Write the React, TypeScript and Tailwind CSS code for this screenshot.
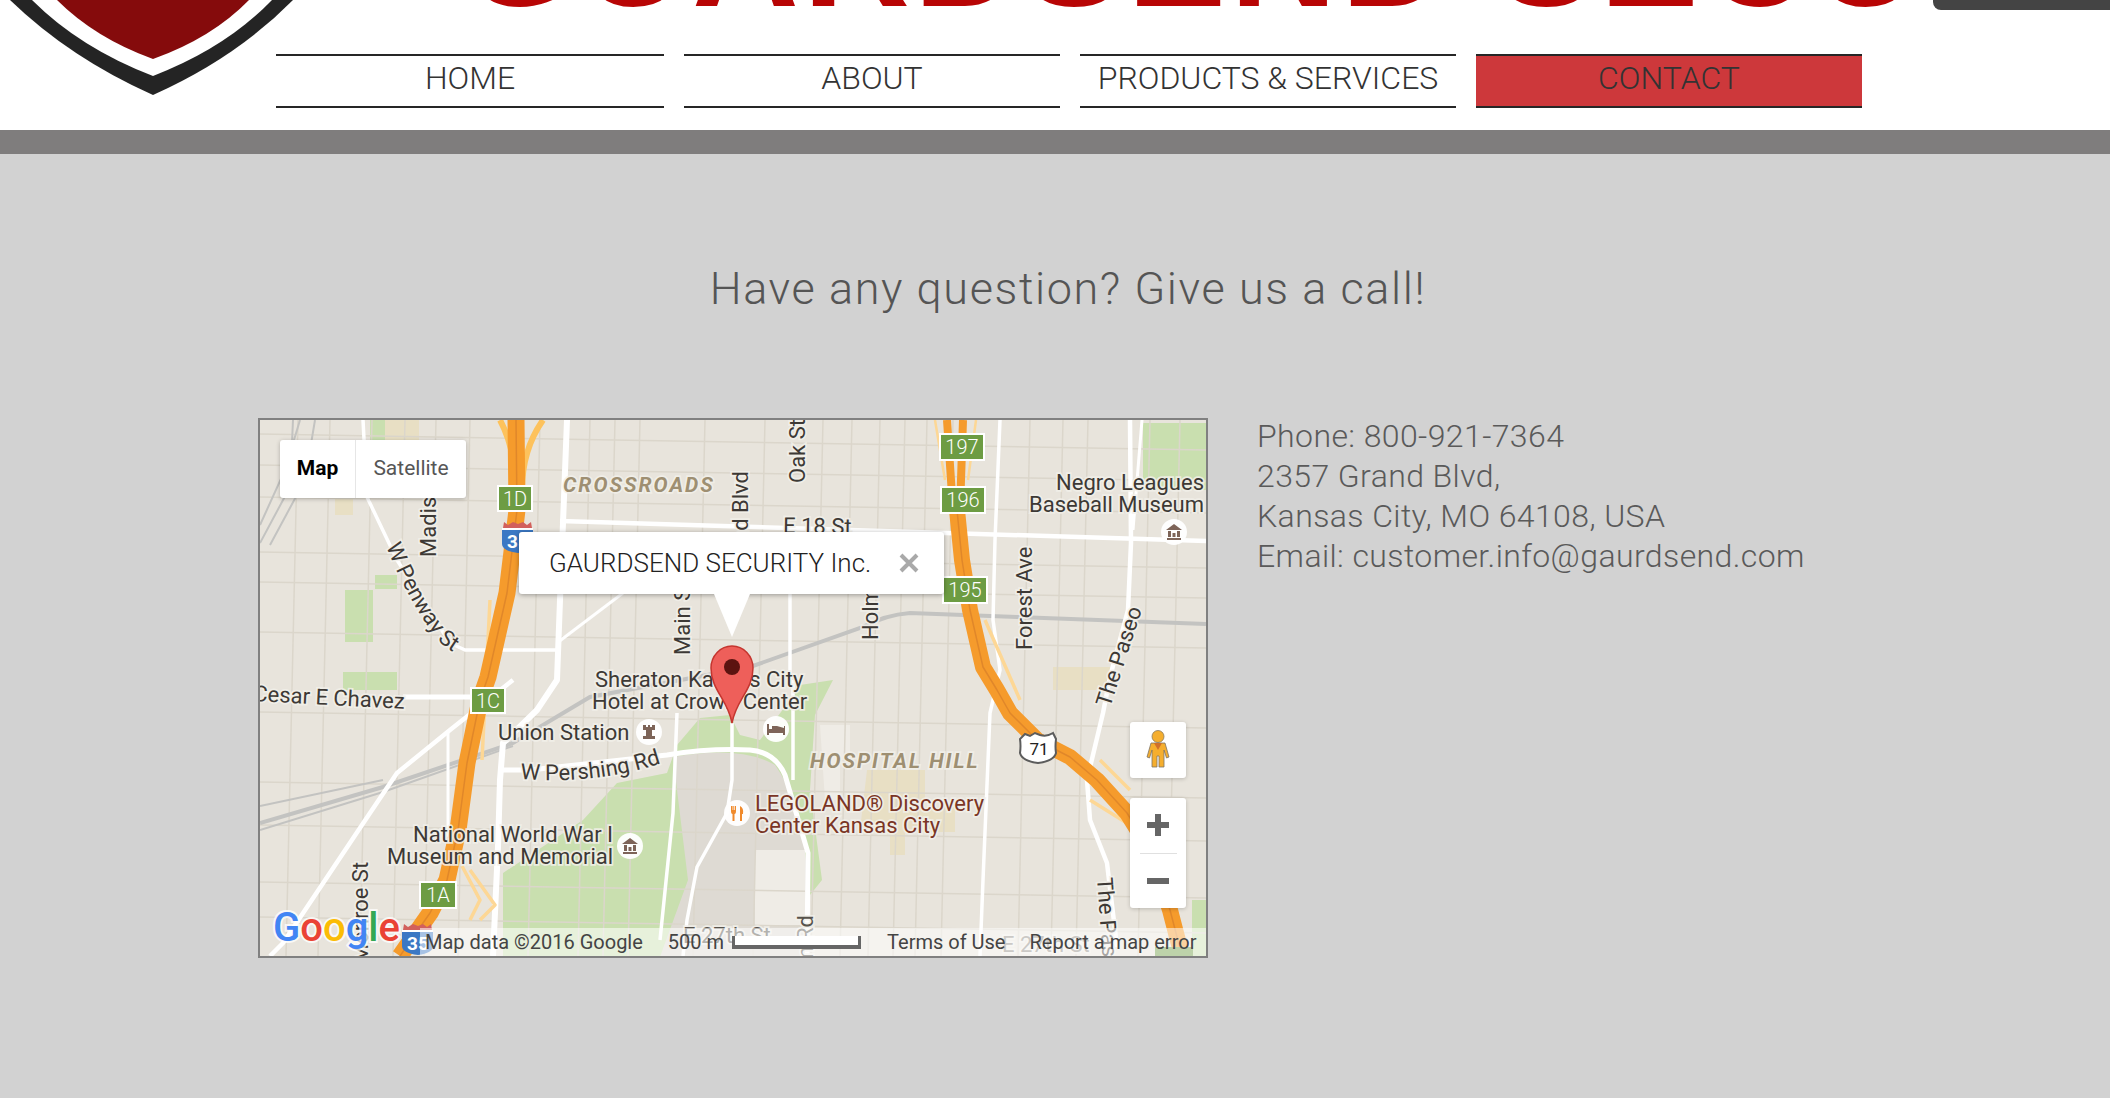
const din = "font-['Roboto',sans-serif] font-light";

const navItems = [
  { label: "HOME", w: "w-[388px]", active: false },
  { label: "ABOUT", w: "w-[376px]", active: false },
  { label: "PRODUCTS & SERVICES", w: "w-[376px]", active: false },
  { label: "CONTACT", w: "w-[386px]", active: true },
];

// minor street grid, in page coordinates
const minorV = [298, 330, 372, 405, 436, 470, 540, 590, 615, 640, 705, 765, 823, 852, 880, 905, 927, 953, 1030, 1063, 1088, 1150, 1180];
const minorH = [442, 473, 505, 560, 590, 640, 720, 790, 833, 890, 925];

function Shield({ x, y, w, h, text }: { x: number; y: number; w: number; h: number; text: string }) {
  return (
    <g>
      <rect x={x + 1} y={y + 1} width={w - 2} height={h - 2} fill="#6d9c43" stroke="#fff" strokeWidth="2" />
      <text x={x + w / 2} y={y + h / 2 + 7} textAnchor="middle" fill="#fff" fontSize="20" fontWeight="300">
        {text}
      </text>
    </g>
  );
}

function Interstate({ x, y }: { x: number; y: number }) {
  return (
    <g>
      <path d={`M${x} ${y + 9} h31 v14 q0 7 -15 9 q-16 -2 -16 -9 z`} fill="#3b78c4" />
      <path d={`M${x + 1} ${y + 7} l1 -6 l4 3 l5 -3 l5 2 l5 -2 l4 3 l4 -3 l1 6 z`} fill="#d2605c" />
      <rect x={x} y={y + 7} width="31" height="2" fill="#fff" />
      <text x={x + 16} y={y + 27} textAnchor="middle" fill="#fff" fontSize="19" fontWeight="700">
        35
      </text>
    </g>
  );
}

function Poi({ x, y, children }: { x: number; y: number; children: React.ReactNode }) {
  return (
    <g transform={`translate(${x} ${y})`}>
      <circle r="13" fill="#fff" fillOpacity="0.95" />
      {children}
    </g>
  );
}

function Label({ x, y, rotate, anchor, size, color, children, italic }: {
  x: number;
  y: number;
  rotate?: number;
  anchor?: "start" | "middle" | "end";
  size?: number;
  color?: string;
  italic?: boolean;
  children: React.ReactNode;
}) {
  return (
    <text
      x={x}
      y={y}
      transform={rotate ? `rotate(${rotate} ${x} ${y})` : undefined}
      textAnchor={anchor || "start"}
      fontSize={size || 22}
      fontWeight={italic ? 700 : 400}
      fontStyle={italic ? "italic" : "normal"}
      letterSpacing={italic ? 2 : 0}
      fill={color || "#3d3935"}
      stroke="#f2f0ea"
      strokeOpacity="0.85"
      strokeWidth="3.5"
      paintOrder="stroke"
    >
      {children}
    </text>
  );
}

function MapDrawing() {
  return (
    <svg viewBox="260 420 946 536" className="block w-full h-full font-['Roboto',sans-serif]">
      <rect x="260" y="420" width="946" height="536" fill="#e8e4dc" />

      {/* parks and blocks */}
      <g fill="#c9dfaf">
        <rect x="345" y="590" width="28" height="52" />
        <rect x="343" y="672" width="54" height="18" />
        <rect x="375" y="575" width="22" height="14" />
        <path d="M503 957 L503 873 L583 820 L617 783 L667 773 L677 745 L700 718 L730 715 L740 735 L760 740 L790 700 L800 685 L833 680 L815 715 L810 790 L822 880 L806 900 L806 957 Z" />
        <path d="M1143 423 H1206 V490 H1143 Z" />
        <path d="M1192 900 H1206 V956 H1192 Z" />
        <path d="M370 420 h30 l-8 22 h-22 z" />
      </g>
      <path d="M673 757 Q740 745 775 765 Q800 800 806 860 L806 957 L660 957 L688 880 Z" fill="#dedad3" />
      <path d="M820 725 H850 V760 H840 V800 H825 Z M755 850 H805 V925 H755 Z" fill="#efece6" />
      <g fill="#e8dfc4">
        <path d="M867 770 H925 V807 H955 V832 H905 V855 H890 V830 H860 Z" />
        <path d="M1053 667 H1110 V690 H1053 Z" />
        <path d="M385 420 h34 v20 h-34 z" />
        <path d="M335 495 h18 v20 h-18 z" />
      </g>

      {/* minor streets */}
      <g stroke="#dbd6cb" strokeWidth="1.5" fill="none">
        {minorV.map((x) => (
          <path key={x} d={`M${x} 420 L${x - 12} 956`} />
        ))}
        {minorH.map((y) => (
          <path key={y} d={`M260 ${y - 8} L1206 ${y + 8}`} />
        ))}
      </g>

      {/* rail */}
      <g stroke="#c3c3c1" fill="none">
        <path d="M1206 624 L1017 617 L910 613 Q885 615 863 627 L750 667 L590 697 L513 743 L383 787 L260 823" strokeWidth="4" />
        <path d="M513 746 L383 792 L260 830 M383 780 L260 806 M260 543 L290 487 L293 420 M270 545 L305 480 L315 420 M260 525 L285 470 L300 420" strokeWidth="2" />
      </g>

      {/* arterials */}
      <g stroke="#fff" fill="none" strokeWidth="4.5" strokeLinejoin="round">
        <path d="M560 521 L1206 541" />
        <path d="M567 420 L560 600 L557 680 L537 710 L503 743 L500 780 L498 847 L493 956" strokeWidth="6" />
        <path d="M1000 420 L995 540 L993 620 L1000 670 L990 713 L983 880 L980 956" strokeWidth="3.5" />
        <path d="M1130 420 L1131 543 L1128 610 L1110 677 L1103 713 L1087 780 L1090 820 L1107 863 L1117 947" />
        <path d="M1142 420 L1133 530" strokeWidth="3" />
        <path d="M403 697 H470" strokeWidth="5" />
        <path d="M513 680 L450 730 L397 773 L370 813 L283 943 L270 956" />
        <path d="M363 420 L367 497 L397 560 L450 643 L465 650 H560" strokeWidth="3.5" />
        <path d="M557 643 L623 593" strokeWidth="3" />
        <path d="M732 723 V780 L727 813 L697 867 L687 920 L683 956" strokeWidth="3.5" />
        <path d="M677 713 L673 813 L660 940" strokeWidth="3.5" />
        <path d="M503 770 H530 L667 755 Q710 748 750 750 Q775 752 785 775 L808 853 L807 956" strokeWidth="5" />
        <path d="M793 680 V780" strokeWidth="3.5" />
        <path d="M790 594 V680" strokeWidth="3.5" />
        <path d="M448 730 V840" strokeWidth="3" />
      </g>

      {/* highways */}
      <g fill="none" strokeLinecap="butt" strokeLinejoin="round">
        <path d="M482 760 L490 600 M462 866 L480 900 L470 920 M470 870 L495 905 L480 920" stroke="#fdd795" strokeWidth="3.5" />
        <path d="M500 420 Q516 450 515 490 M543 420 Q522 450 522 490" stroke="#fdc25c" strokeWidth="6" />
        <path d="M516 420 L517 510 L507 593 L488 677 L480 700 L467 763 L458 830 L447 880 L430 913 L400 956" stroke="#f59b2c" strokeWidth="17" />
        <path d="M516 420 L517 510 L507 593 L488 677 L480 700 L467 763 L458 830 L447 880 L430 913 L400 956" stroke="#e0872a" strokeWidth="1.5" />
        <path d="M947 420 L953 510 M963 420 L960 510" stroke="#f59b2c" strokeWidth="8" />
        <path d="M935 420 L945 480 M976 420 L968 480" stroke="#fdd795" strokeWidth="2.5" />
        <path d="M975 660 L1010 700 M985 620 L1020 700 M1040 735 L1065 750 M1100 760 L1130 790 M1090 800 L1130 825" stroke="#fdd795" strokeWidth="3.5" />
        <path d="M957 510 L962 560 L970 610 L983 667 L997 690 L1010 713 L1037 740 L1070 757 L1097 780 L1127 813 L1150 850 L1170 910 L1182 956" stroke="#f59b2c" strokeWidth="16" />
        <path d="M957 510 L962 560 L970 610 L983 667 L997 690 L1010 713 L1037 740 L1070 757 L1097 780 L1127 813 L1150 850 L1170 910 L1182 956" stroke="#e0872a" strokeWidth="1.5" />
      </g>

      <Interstate x={502} y={521} />
      <Interstate x={402} y={923} />
      <Shield x={497} y={485} w={36} h={27} text="1D" />
      <Shield x={939} y={433} w={46} h={28} text="197" />
      <Shield x={940} y={486} w={46} h={28} text="196" />
      <Shield x={942} y={576} w={46} h={28} text="195" />
      <Shield x={470} y={687} w={36} h={27} text="1C" />
      <Shield x={419} y={881} w={38} h={28} text="1A" />
      <rect x="1155" y="947" width="38" height="12" fill="#6d9c43" />
      <g>
        <path d="M1025 734 l5 2 l5 -3 l5 2 q7 2 13 -2 l3 6 q-1 8 0 14 q-2 8 -18 10 q-16 -2 -18 -10 q1 -7 0 -14 z" fill="#fff" stroke="#5c5c5c" strokeWidth="2" />
        <text x="1039" y="755" textAnchor="middle" fontSize="17" fill="#222">71</text>
      </g>

      {/* labels */}
      <Label x={563} y={492} size={21} color="#9e8f72" italic>CROSSROADS</Label>
      <Label x={810} y={768} size={21} color="#9e8f72" italic>HOSPITAL HILL</Label>
      <Label x={1204} y={490} anchor="end">Negro Leagues</Label>
      <Label x={1204} y={512} anchor="end">Baseball Museum</Label>
      <Label x={436} y={557} rotate={-90}>Madison</Label>
      <Label x={805} y={483} rotate={-90}>Oak St</Label>
      <Label x={748} y={577} rotate={-90}>Grand Blvd</Label>
      <Label x={690} y={655} rotate={-90}>Main St</Label>
      <Label x={878} y={640} rotate={-90}>Holm</Label>
      <Label x={1032} y={650} rotate={-90}>Forest Ave</Label>
      <Label x={1110} y={708} rotate={-72}>The Paseo</Label>
      <Label x={1097} y={878} rotate={86}>The Paseo</Label>
      <Label x={783} y={533} rotate={1}>E 18 St</Label>
      <Label x={595} y={687}>Sheraton Kansas City</Label>
      <Label x={592} y={709}>Hotel at Crown Center</Label>
      <Label x={253} y={701} rotate={3}>Cesar E Chavez</Label>
      <Label x={498} y={740}>Union Station</Label>
      <Label x={413} y={842}>National World War I</Label>
      <Label x={387} y={864}>Museum and Memorial</Label>
      <Label x={368} y={963} rotate={-90}>Monroe St</Label>
      <Label x={755} y={811} color="#7a3525">LEGOLAND® Discovery</Label>
      <Label x={755} y={833} color="#7a3525">Center Kansas City</Label>
      <Label x={683} y={943} color="#57534c">E 27th St</Label>
      <Label x={813} y={915} rotate={-90} anchor="end" color="#57534c">Gillham Rd</Label>
      <Label x={1002} y={952} color="#8c8880">E 27th St</Label>
      <path id="penway" d="M386 546 Q412 610 442 644 Q456 656 480 664" fill="none" />
      <text fontSize="22" fill="#3d3935" stroke="#f2f0ea" strokeOpacity="0.85" strokeWidth="3.5" paintOrder="stroke">
        <textPath href="#penway">W Penway St</textPath>
      </text>
      <path id="pershing" d="M520 779 Q600 785 668 761" fill="none" />
      <text fontSize="22" fill="#3d3935" stroke="#f2f0ea" strokeOpacity="0.85" strokeWidth="3.5" paintOrder="stroke">
        <textPath href="#pershing">W Pershing Rd</textPath>
      </text>

      {/* points of interest */}
      <Poi x={649} y={732}>
        <path d="M-6 -7 h3 v2 h2 v-2 h2 v2 h2 v-2 h3 v5 h-3 v6 h3 v3 h-12 v-3 h3 v-6 h-3 z" fill="#7d6458" />
      </Poi>
      <Poi x={630} y={846}>
        <path d="M-8 -2 L0 -8 L8 -2 Z M-7 6 h14 v2 h-14 z M-6 -1 h3 v6 h-3 z M3 -1 h3 v6 h-3 z M-1.5 1 h3 v4 h-3 z" fill="#7d6458" />
      </Poi>
      <Poi x={1174} y={532}>
        <path d="M-8 -2 L0 -8 L8 -2 Z M-7 6 h14 v2 h-14 z M-6 -1 h3 v6 h-3 z M3 -1 h3 v6 h-3 z M-1.5 1 h3 v4 h-3 z" fill="#7d6458" />
      </Poi>
      <Poi x={737} y={813}>
        <path d="M-6 -7 v5 q0 3 1.5 3 v7 h2 v-7 q1.5 0 1.5 -3 v-5 h-1 v4 h-0.7 v-4 h-1 v4 h-0.7 v-4 z M3 -7 q4 2 3 8 h-1 v7 h-2 z" fill="#f08a2c" />
      </Poi>
      <Poi x={776} y={729}>
        <path d="M-9 -5 h2 v5 h3 v-3 h3 q1 0 2 0 l7 2 v-2 h1 v9 h-2 v-2 h-14 v2 h-2 z" fill="#7d6458" />
      </Poi>

      {/* marker */}
      <path d="M732 723 C728 700 711 690 711 668 A21 22 0 0 1 753 668 C753 690 736 700 732 723 Z" fill="#ee5f5a" stroke="#c5352f" strokeWidth="1.5" />
      <circle cx="732" cy="667" r="8" fill="#5c1310" />

      {/* google mark */}
      <text x="273" y="941" fontSize="40" fontWeight="500" stroke="#fff" strokeOpacity="0.75" strokeWidth="4" paintOrder="stroke">
        <tspan fill="#4285f4">G</tspan>
        <tspan fill="#ea4335">o</tspan>
        <tspan fill="#fbbc05">o</tspan>
        <tspan fill="#4285f4">g</tspan>
        <tspan fill="#34a853">l</tspan>
        <tspan fill="#ea4335">e</tspan>
      </text>
    </svg>
  );
}

function MapEmbed() {
  return (
    <div className="relative w-[950px] h-[540px] shrink-0 border-2 border-[#808080] overflow-hidden font-['Roboto',sans-serif]">
      <MapDrawing />

      <div className="absolute left-[20px] top-[20px] flex h-[58px] w-[186px] rounded-[3px] bg-white shadow-[0_1px_4px_rgba(0,0,0,0.25)] text-[21px]">
        <div className="flex w-[76px] items-center justify-center border-r border-[#e6e6e6] font-bold text-black">Map</div>
        <div className="flex flex-1 items-center justify-center text-[#565656]">Satellite</div>
      </div>

      <div className="absolute left-[259px] top-[112px] flex h-[62px] w-[425px] items-center justify-between rounded-[3px] bg-white pl-[30px] pr-[25px] shadow-[0_1px_5px_rgba(0,0,0,0.35)]">
        <span className="text-[26px] font-light text-[#222]">GAURDSEND SECURITY Inc.</span>
        <svg width="20" height="20" viewBox="0 0 20 20">
          <path d="M2 2 L18 18 M18 2 L2 18" stroke="#a9a9a9" strokeWidth="4" />
        </svg>
      </div>
      <svg className="absolute left-[452px] top-[174px]" width="40" height="44" viewBox="0 0 40 44">
        <path d="M2 0 L20 43 L38 0 Z" fill="#fff" />
      </svg>

      <div className="absolute left-[870px] top-[302px] flex h-[56px] w-[56px] items-center justify-center rounded-[3px] bg-white shadow-[0_1px_4px_rgba(0,0,0,0.2)]">
        <svg width="24" height="40" viewBox="0 0 24 40">
          <circle cx="12" cy="6.5" r="6" fill="#f5ae2e" stroke="#8a7a5a" strokeWidth="0.8" />
          <path d="M5 13 H19 L23 27 L20.5 28 L18 20 V37 H13 V26 H11 V37 H6 V20 L3.5 28 L1 27 Z" fill="#f5ae2e" stroke="#7d7465" strokeWidth="0.8" />
          <path d="M8 13 L12 20 L16 13 Z" fill="#d0702a" />
        </svg>
      </div>

      <div className="absolute left-[870px] top-[378px] flex h-[110px] w-[56px] flex-col items-center rounded-[3px] bg-white shadow-[0_1px_4px_rgba(0,0,0,0.2)]">
        <div className="flex flex-1 items-center justify-center">
          <svg width="22" height="22" viewBox="0 0 22 22">
            <path d="M8 0 H14 V8 H22 V14 H14 V22 H8 V14 H0 V8 H8 Z" fill="#666" />
          </svg>
        </div>
        <div className="h-px w-[37px] bg-[#e0e0e0]" />
        <div className="flex flex-1 items-center justify-center">
          <div className="h-[6px] w-[22px] bg-[#666]" />
        </div>
      </div>

      <div className="absolute left-[160px] right-0 bottom-0 flex h-[28px] items-center bg-white/55 text-[20px] text-[#444]">
        <span className="ml-[5px]">Map data ©2016 Google</span>
        <span className="ml-[25px]">500 m</span>
        <div className="ml-[8px] h-[13px] w-[129px] border-x-[3px] border-b-[4px] border-[#666] bg-white" />
        <span className="ml-[26px]">Terms of Use</span>
        <span className="ml-[24px]">Report a map error</span>
      </div>
    </div>
  );
}

export default function App() {
  return (
    <div className="h-[1098px] w-full overflow-hidden bg-[#d2d2d2]">
      <header className="flex h-[130px] bg-white">
        <svg className="h-[100px] w-[276px] shrink-0 overflow-visible" viewBox="0 0 276 100">
          <path d="M10 0 Q70 58 153 95 Q236 58 293 0 Z" fill="#242424" />
          <path d="M32 0 Q80 48 153 76 Q226 48 272 0 Z" fill="#fff" />
          <path d="M57 0 Q95 38 153 59 Q212 38 249 0 Z" fill="#850b0c" />
        </svg>
        <div className="relative flex-1">
          <div className="flex h-[54px]">
            <div className="ml-[186px] h-[7px] w-[1450px] overflow-hidden">
              <div className="mt-[-110px] whitespace-nowrap text-[148px] font-bold leading-[130px] tracking-[4px] text-[#b80505] font-['Liberation_Sans',sans-serif]">
                GUARDSEND SECURITY
              </div>
            </div>
            <div className="absolute right-0 top-0 h-[10px] w-[177px] rounded-bl-[8px] bg-[#444]" />
          </div>
          <nav className="flex gap-[20px]">
            {navItems.map((item) => (
              <div
                key={item.label}
                className={`${item.w} ${item.active ? "bg-[#cd383b]" : "bg-white"} flex h-[54px] items-center justify-center border-y-2 border-[#262626] pb-[6px] text-[32px] text-[#333] ${din}`}
              >
                <span className="whitespace-nowrap">{item.label}</span>
              </div>
            ))}
          </nav>
        </div>
      </header>
      <div className="h-[24px] bg-[#7f7d7d]" />
      <main className="ml-[258px] w-[1620px]">
        <h1 className={`mt-[110px] text-center text-[45px] leading-[50px] tracking-[1.6px] text-[#555] ${din}`}>
          Have any question? Give us a call!
        </h1>
        <div className="mt-[104px] flex gap-[49px]">
          <MapEmbed />
          <div className={`-mt-[2px] text-[32px] leading-[40px] tracking-[0.4px] text-[#5a5a5a] ${din}`}>
            <p>Phone: 800-921-7364</p>
            <p>2357 Grand Blvd,</p>
            <p>Kansas City, MO 64108, USA</p>
            <p>Email: customer.info@gaurdsend.com</p>
          </div>
        </div>
      </main>
    </div>
  );
}
